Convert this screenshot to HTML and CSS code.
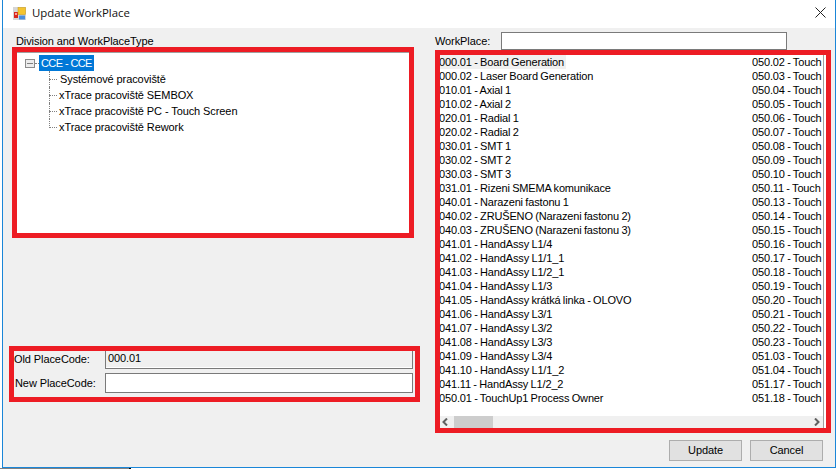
FILE: index.html
```html
<!DOCTYPE html>
<html lang="cs">
<head>
<meta charset="utf-8">
<title>Update WorkPlace</title>
<link rel="stylesheet" href="styles.css">
</head>
<body>
<div class="window">
  <header class="titlebar">
    <svg class="app-icon" width="13" height="13" viewBox="0 0 13 13">
      <rect x="0" y="0" width="13" height="13" fill="#d6d6d6"/>
      <rect x="1" y="5" width="4" height="6" fill="#d8261c"/>
      <rect x="2" y="6" width="2" height="2" fill="#f7a0a0"/>
      <rect x="5" y="0.5" width="7.5" height="7" fill="#f4c430" stroke="#c99a10" stroke-width="0.5"/>
      <rect x="6" y="8.5" width="6" height="4" fill="#4a8ede"/>
    </svg>
    <span class="title">Update WorkPlace</span>
    <svg class="close" width="11" height="11" viewBox="0 0 11 11">
      <path d="M0.5 0.5 L10.5 10.5 M10.5 0.5 L0.5 10.5" stroke="#222" stroke-width="1" fill="none"/>
    </svg>
  </header>
  <main class="content">
    <section class="left">
      <div class="caption">Division and WorkPlaceType</div>
      <div class="tree-mark">
        <div class="tree">
          <div class="root-row">
            <span class="expander"></span>
            <span class="root-dash"></span>
            <span class="root-label">CCE - CCE</span>
          </div>
          <ul class="nodes">
            <li class="node first">Systémové pracoviště</li>
            <li class="node">xTrace pracoviště SEMBOX</li>
            <li class="node">xTrace pracoviště PC - Touch Screen</li>
            <li class="node">xTrace pracoviště Rework</li>
          </ul>
        </div>
      </div>
      <div class="code-mark">
        <div class="field">
          <span class="field-label old">Old PlaceCode:</span>
          <div class="input readonly">000.01</div>
        </div>
        <div class="field">
          <span class="field-label new">New PlaceCode:</span>
          <div class="input"></div>
        </div>
      </div>
    </section>
    <section class="right">
      <div class="search">
        <span class="search-label">WorkPlace:</span>
        <div class="search-input"></div>
      </div>
      <div class="list-mark">
        <div class="list">
          <div class="columns">
            <ul class="col col-a">
              <li class="selected">000.01 - Board Generation</li>
              <li>000.02 - Laser Board Generation</li>
              <li>010.01 - Axial 1</li>
              <li>010.02 - Axial 2</li>
              <li>020.01 - Radial 1</li>
              <li>020.02 - Radial 2</li>
              <li>030.01 - SMT 1</li>
              <li>030.02 - SMT 2</li>
              <li>030.03 - SMT 3</li>
              <li>031.01 - Rizeni SMEMA komunikace</li>
              <li>040.01 - Narazeni fastonu 1</li>
              <li>040.02 - ZRUŠENO (Narazeni fastonu 2)</li>
              <li>040.03 - ZRUŠENO (Narazeni fastonu 3)</li>
              <li>041.01 - HandAssy L1/4</li>
              <li>041.02 - HandAssy L1/1_1</li>
              <li>041.03 - HandAssy L1/2_1</li>
              <li>041.04 - HandAssy L1/3</li>
              <li>041.05 - HandAssy krátká linka - OLOVO</li>
              <li>041.06 - HandAssy L3/1</li>
              <li>041.07 - HandAssy L3/2</li>
              <li>041.08 - HandAssy L3/3</li>
              <li>041.09 - HandAssy L3/4</li>
              <li>041.10 - HandAssy L1/1_2</li>
              <li>041.11 - HandAssy L1/2_2</li>
              <li>050.01 - TouchUp1 Process Owner</li>
            </ul>
            <ul class="col col-b">
              <li>050.02 - Touch</li>
              <li>050.03 - Touch</li>
              <li>050.04 - Touch</li>
              <li>050.05 - Touch</li>
              <li>050.06 - Touch</li>
              <li>050.07 - Touch</li>
              <li>050.08 - Touch</li>
              <li>050.09 - Touch</li>
              <li>050.10 - Touch</li>
              <li>050.11 - Touch</li>
              <li>050.13 - Touch</li>
              <li>050.14 - Touch</li>
              <li>050.15 - Touch</li>
              <li>050.16 - Touch</li>
              <li>050.17 - Touch</li>
              <li>050.18 - Touch</li>
              <li>050.19 - Touch</li>
              <li>050.20 - Touch</li>
              <li>050.21 - Touch</li>
              <li>050.22 - Touch</li>
              <li>050.23 - Touch</li>
              <li>051.03 - Touch</li>
              <li>051.04 - Touch</li>
              <li>051.17 - Touch</li>
              <li>051.18 - Touch</li>
            </ul>
          </div>
          <div class="scrollbar">
            <svg class="arrow" width="6" height="8" viewBox="0 0 6 8"><path d="M5 0.5 L1.5 4 L5 7.5" fill="none" stroke="#606060" stroke-width="2"/></svg>
            <div class="track"><div class="thumb"></div></div>
            <svg class="arrow" width="6" height="8" viewBox="0 0 6 8"><path d="M1 0.5 L4.5 4 L1 7.5" fill="none" stroke="#606060" stroke-width="2"/></svg>
          </div>
        </div>
      </div>
      <div class="actions">
        <div class="btn">Update</div>
        <div class="btn">Cancel</div>
      </div>
    </section>
  </main>
</div>
</body>
</html>
```
FILE: styles.css
```css
* { box-sizing: border-box; }
html, body { margin: 0; padding: 0; }
body {
  width: 837px;
  height: 469px;
  background: linear-gradient(90deg, #808080 129px, #000 129px, #000 131px, #fff 131px) left bottom / 100% 1px no-repeat, #fff;
  overflow: hidden;
  font-family: "Liberation Sans", Arial, sans-serif;
  font-size: 11px;
  letter-spacing: -0.09px;
  color: #000;
}
ul { list-style: none; margin: 0; padding: 0; }

.window {
  margin-left: 2px;
  width: 834px;
  height: 468px;
  border: 1px solid #1a86d8;
  border-top: 0;
  display: flex;
  flex-direction: column;
  background: #f0f0f0;
}
.titlebar {
  height: 28px;
  flex: none;
  background: #fff;
  display: flex;
  align-items: center;
  padding: 0 9px 3px 10px;
}
.app-icon { margin-right: 6px; margin-top: 1px; }
.title { font-family: "Open Sans", sans-serif; font-size: 11.4px; letter-spacing: 0; flex: 1; color: #111; }

.content { flex: 1; display: flex; min-height: 0; }
.left { width: 432px; flex: none; padding: 5px 0 0 6px; display: flex; flex-direction: column; }
.caption { height: 14px; padding-left: 7px; line-height: 16px; }
.tree-mark {
  margin-left: 3px;
  width: 402px;
  height: 191px;
  border: 5px solid #ed1c24;
}
.tree {
  height: 100%;
  background: #fff;
  border-top: 1px solid #a0a0a0;
  padding: 2px 0 0 8px;
}
.root-row { display: flex; align-items: center; height: 16px; }
.expander {
  width: 10px;
  height: 9px;
  border: 1px solid #8c8c8c;
  background: linear-gradient(#808080, #808080) center / 6px 1px no-repeat, #ececec;
}
.root-dash { width: 4px; border-top: 1px dotted #808080; }
.root-label {
  background: #0078d7;
  color: #fff;
  height: 16px;
  line-height: 16px;
  padding: 0 2px;
  width: 55px;
  letter-spacing: -0.6px;
  white-space: nowrap;
}
.nodes { margin-left: 24px; }
.node {
  position: relative;
  height: 16px;
  line-height: 16px;
  padding-left: 10px;
  white-space: nowrap;
}
.node.first { padding-left: 11px; }
.node::before {
  content: "";
  position: absolute;
  left: 0;
  top: 8px;
  width: 8px;
  border-top: 1px dotted #808080;
}
.node::after {
  content: "";
  position: absolute;
  left: 0;
  top: 0;
  height: 16px;
  border-left: 1px dotted #808080;
}
.node:last-child::after { height: 9px; }

.code-mark {
  margin-top: 108px;
  width: 411px;
  height: 56px;
  border: 5px solid #ed1c24;
  display: flex;
  flex-direction: column;
  gap: 4px;
}
.field { display: flex; align-items: center; height: 18px; }
.field + .field { height: 20px; }
.field-label { width: 91px; flex: none; white-space: nowrap; }
.field-label.old { padding-bottom: 2px; }
.field-label.new { padding-left: 1px; }
.input {
  width: 308px;
  height: 100%;
  border: 1px solid #7a7a7a;
  background: #fff;
  padding-left: 2px;
  line-height: 15px;
}
.input.readonly {
  background: #f0f0f0;
  border-top: 0;
  box-shadow: inset 0 -1px 0 #fff;
}

.right { flex: 1; padding: 4px 0 0 0; display: flex; flex-direction: column; min-width: 0; }
.search { display: flex; align-items: center; height: 18px; margin-right: 5px; }
.search-label { width: 66px; flex: none; line-height: 20px; }
.search-input { width: 286px; height: 18px; background: #fff; border: 1px solid #7a7a7a; }
.list-mark {
  width: 396px;
  height: 383px;
  border: 5px solid #ed1c24;
}
.list {
  height: 100%;
  background: #fff;
  display: flex;
  flex-direction: column;
  padding-right: 2px;
}
.columns { flex: 1; display: flex; overflow: hidden; min-height: 0; border-right: 1px solid #a0a0a0; }
.col li { height: 14px; line-height: 14px; white-space: nowrap; letter-spacing: -0.15px; word-spacing: -0.5px; }
.col-a { width: 313px; flex: none; margin-left: -1px; }
.col-a .selected { background: #f0f0f0; width: 127px; }
.col-b { overflow: hidden; flex: 1; }
.scrollbar {
  height: 12px;
  flex: none;
  background: #f0f0f0;
  display: flex;
  align-items: center;
  padding: 0 3px 0 2px;
  border-right: 1px solid #a0a0a0;
}
.arrow { flex: none; }
.track { flex: 1; height: 100%; padding-left: 6px; }
.thumb { width: 39px; height: 100%; background: #cdcdcd; }

.actions {
  display: flex;
  gap: 8px;
  justify-content: flex-end;
  padding-right: 12px;
  margin-top: 7px;
}
.btn {
  width: 73px;
  height: 21px;
  border: 1px solid #adadad;
  background: #e1e1e1;
  text-align: center;
  line-height: 19px;
}
```
